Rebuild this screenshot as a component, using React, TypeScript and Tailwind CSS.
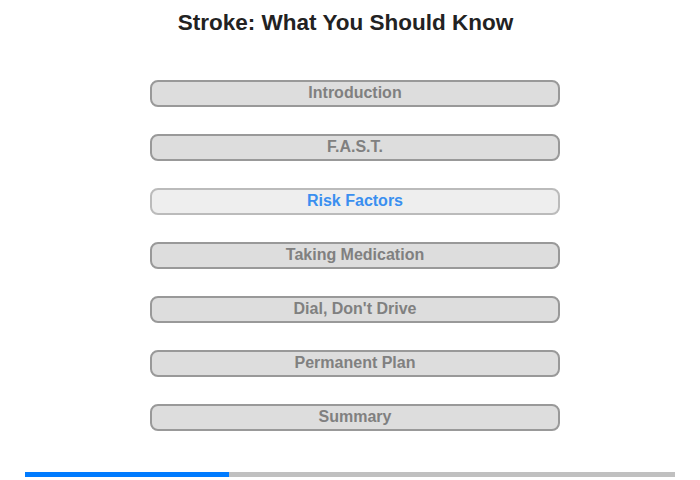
import React from "react";

const sections = [
  "Introduction",
  "F.A.S.T.",
  "Risk Factors",
  "Taking Medication",
  "Dial, Don't Drive",
  "Permanent Plan",
  "Summary",
];

const activeIndex = 2;

export default function App() {
  return (
    <div className="h-[480px] w-[700px] bg-white font-['Liberation_Sans',Arial,sans-serif]">
      <h1 className="pr-[9px] pt-[10px] text-center text-[22.5px] font-bold leading-[26px] text-[#222222]">
        Stroke: What You Should Know
      </h1>

      <div className="mt-[44px] flex flex-col items-center gap-[27px] pl-[10px]">
        {sections.map((label, index) => (
          <button
            key={label}
            className={
              index === activeIndex
                ? "h-[27px] w-[410px] rounded-[8px] border-2 border-[#bbbbbb] bg-[#eeeeee] pb-[2px] text-[16px] font-bold leading-[20px] text-[#3a8ff0]"
                : "h-[27px] w-[410px] rounded-[8px] border-2 border-[#999999] bg-[#dddddd] pb-[2px] text-[16px] font-bold leading-[20px] text-[#808080]"
            }
          >
            {label}
          </button>
        ))}
      </div>

      <div className="mx-[25px] mt-[41px] flex h-[5px] bg-[#c0c0c0]">
        <div className="h-full w-[204px] bg-[#007bff]" />
      </div>
    </div>
  );
}
